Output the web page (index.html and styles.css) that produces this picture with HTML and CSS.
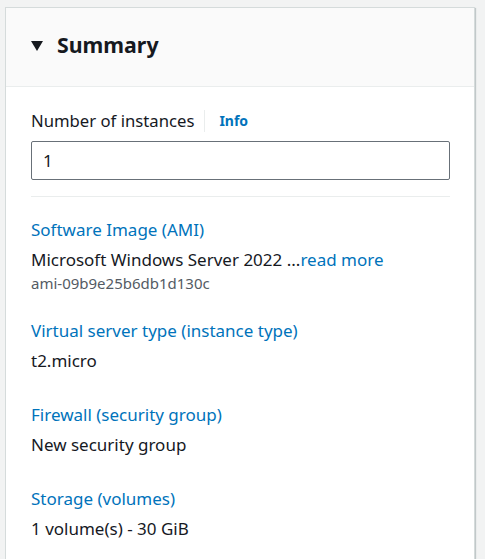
FILE: index.html
```html
<!DOCTYPE html>
<html>
<head>
<meta charset="utf-8">
<link rel="stylesheet" href="styles.css">
</head>
<body>
<div class="card">
  <div class="card-header">
    <svg class="caret" width="12" height="10" viewBox="0 0 12 10"><polygon points="0,0 12,0 6,10" fill="#16191f"/></svg>
    <h2 class="title">Summary</h2>
  </div>
  <div class="card-body">
    <div class="field-label">
      <span>Number of instances</span>
      <span class="sep"></span>
      <a class="info">Info</a>
    </div>
    <div class="input">1</div>
    <div class="divider"></div>
    <div class="item">
      <a class="key">Software Image (AMI)</a>
      <div class="value">Microsoft Windows Server 2022 ...<a class="more">read more</a></div>
      <div class="sub">ami-09b9e25b6db1d130c</div>
    </div>
    <div class="item">
      <a class="key">Virtual server type (instance type)</a>
      <div class="value">t2.micro</div>
    </div>
    <div class="item">
      <a class="key">Firewall (security group)</a>
      <div class="value">New security group</div>
    </div>
    <div class="item last">
      <a class="key">Storage (volumes)</a>
      <div class="value">1 volume(s) - 30 GiB</div>
    </div>
  </div>
</div>
</body>
</html>
```
FILE: styles.css
```css
html, body { margin: 0; padding: 0; }
body {
  background: #f2f3f3;
  font-family: "Noto Sans", "Open Sans", sans-serif;
  color: #16191f;
  padding: 7px 0 0 5px;
  height: 559px;
  box-sizing: border-box;
  overflow: hidden;
  display: flex;
  flex-direction: column;
}
.card {
  width: 470px;
  box-sizing: border-box;
  background: #fff;
  border: 1px solid #d5dbdb;
  border-bottom: none;
  box-shadow: 1px 1px 1px rgba(0,28,36,0.2);
  flex: 1;
}
.card-header {
  background: #fafafa;
  border-bottom: 1px solid #eaeded;
  height: 79px;
  box-sizing: border-box;
  display: flex;
  align-items: center;
  padding: 0 25px 4px 25px;
  gap: 14px;
}
.caret { margin-top: 1px; }
.title {
  margin: 0;
  font-size: 21.3px;
  font-weight: 700;
  line-height: 28px;
}
.card-body {
  padding: 23px 24px 0 25px;
}
.field-label {
  display: flex;
  align-items: center;
  font-size: 16.7px;
  line-height: 22px;
  height: 22px;
}
.sep {
  width: 1px;
  height: 22px;
  background: #eaeded;
  margin: 0 14px 0 10px;
}
.info {
  color: #0073bb;
  font-weight: 700;
  font-size: 14px;
}
.input {
  margin-top: 9px;
  height: 39px;
  box-sizing: border-box;
  border: 1px solid #687078;
  border-radius: 2px;
  padding: 0 11px;
  font-size: 17px;
  line-height: 37px;
}
.divider {
  margin-top: 16px;
  height: 1px;
  background: #eaeded;
}
.item {
  padding-top: 22px;
  margin-bottom: 10px;
}
.item.last { margin-bottom: 0; }
.key {
  display: block;
  color: #0073bb;
  font-size: 17px;
  line-height: 22px;
}
.value {
  margin-top: 8px;
  font-size: 17px;
  line-height: 22px;
}
.more { color: #0073bb; }
.sub {
  color: #545b64;
  font-size: 15px;
  line-height: 14px;
  margin-top: 5px;
  margin-bottom: -2px;
}
```
